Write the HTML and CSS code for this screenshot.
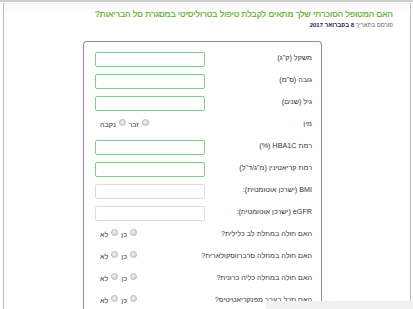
FILE: index.html
```html
<!DOCTYPE html>
<html lang="he" dir="rtl">
<head>
<meta charset="utf-8">
<title>טרוליסיטי</title>
<link rel="stylesheet" href="styles.css">
</head>
<body>
<div class="frame">
  <div class="header">
    <h1 class="title">האם המטופל הסוכרתי שלך מתאים לקבלת טיפול בטרוליסיטי במסגרת סל הבריאות?</h1>
    <div class="meta">פורסם בתאריך <span class="date">8 בפברואר 2017</span></div>
  </div>
  <div class="form">
    <div class="row"><span class="label">משקל (ק"ג)</span><span class="input"></span></div>
    <div class="row"><span class="label">גובה (ס"מ)</span><span class="input"></span></div>
    <div class="row"><span class="label">גיל (שנים)</span><span class="input"></span></div>
    <div class="row"><span class="label">מין</span>
      <span class="options"><span class="opt"><i class="radio"></i>זכר</span><span class="opt"><i class="radio"></i>נקבה</span></span>
    </div>
    <div class="row"><span class="label">רמת HBA1C (%)</span><span class="input"></span></div>
    <div class="row"><span class="label">רמת קריאטינין (מ"ג/ד"ל)</span><span class="input"></span></div>
    <div class="row"><span class="label">BMI (ישרכן אוטומטית):</span><span class="input auto"></span></div>
    <div class="row"><span class="label">eGFR (ישרכן אוטומטית):</span><span class="input auto"></span></div>
    <div class="row"><span class="label">האם חולה במחלת לב כלילית?</span>
      <span class="options yn"><span class="opt"><i class="radio"></i>כן</span><span class="opt"><i class="radio"></i>לא</span></span>
    </div>
    <div class="row"><span class="label">האם חולה במחלה סרברווסקולארית?</span>
      <span class="options yn"><span class="opt"><i class="radio"></i>כן</span><span class="opt"><i class="radio"></i>לא</span></span>
    </div>
    <div class="row"><span class="label">האם חולה במחלה כליה כרונית?</span>
      <span class="options yn"><span class="opt"><i class="radio"></i>כן</span><span class="opt"><i class="radio"></i>לא</span></span>
    </div>
    <div class="row"><span class="label">האם סבל בעבר מפנקריאטיטיס?</span>
      <span class="options yn"><span class="opt"><i class="radio"></i>כן</span><span class="opt"><i class="radio"></i>לא</span></span>
    </div>
  </div>
</div>
<div class="overlay"></div>
</body>
</html>
```

FILE: styles.css
```css
html, body {
  margin: 0;
  padding: 0;
  height: 309px;
  overflow: hidden;
  background: #fff;
}
body {
  border-top: 2px solid #cfcfcf;
  font-family: "Liberation Sans", Arial, sans-serif;
  direction: rtl;
  position: relative;
}
.frame {
  margin: 1px 2px 0 3px;
  height: 306px;
  border-left: 1px solid #bdbdbd;
  border-right: 1px solid #bdbdbd;
  box-sizing: border-box;
}
.header {
  padding: 5px 17px 0 0;
  background: linear-gradient(#f7f7f7, #fff 12px);
}
.title {
  margin: 0;
  font-size: 8.5px;
  line-height: 12px;
  font-weight: normal;
  color: #5fb02a;
  -webkit-text-stroke: 0.2px #5fb02a;
}
.meta {
  margin-top: 1px;
  font-size: 6px;
  line-height: 8px;
  color: #666;
}
.date {
  color: #1c1c50;
  font-weight: bold;
}
.form {
  margin: 12px 88px 0 0;
  width: 239px;
  box-sizing: border-box;
  border: 1px solid #9585c0;
  border-bottom: none;
  border-radius: 4px 4px 0 0;
  padding: 10px 9px 10px 11px;
  display: flex;
  flex-direction: column;
  gap: 7px;
}
.row {
  display: flex;
  justify-content: space-between;
  align-items: flex-start;
  height: 15px;
}
.label {
  font-size: 7.2px;
  line-height: 11px;
  color: #333;
}
.input {
  width: 110px;
  height: 15px;
  box-sizing: border-box;
  border: 1px solid #7fcf8a;
  border-radius: 2px;
  background: #fff;
}
.input.auto {
  border-color: #dcdcdc;
}
.options {
  display: flex;
  gap: 3px;
  margin-left: 5px;
  font-size: 7.2px;
  line-height: 11px;
  color: #333;
  padding-top: 1px;
}
.opt {
  display: flex;
  align-items: flex-start;
  gap: 3px;
}
.radio {
  width: 7px;
  height: 7px;
  border-radius: 50%;
  box-sizing: border-box;
  border: 1px solid #b5b5b5;
  background: radial-gradient(circle at 40% 35%, #f2f2f2, #cfcfcf);
}
.overlay {
  position: absolute;
  left: 266px;
  top: 299px;
  width: 147px;
  height: 10px;
  background: #f1f1f1;
}
```
